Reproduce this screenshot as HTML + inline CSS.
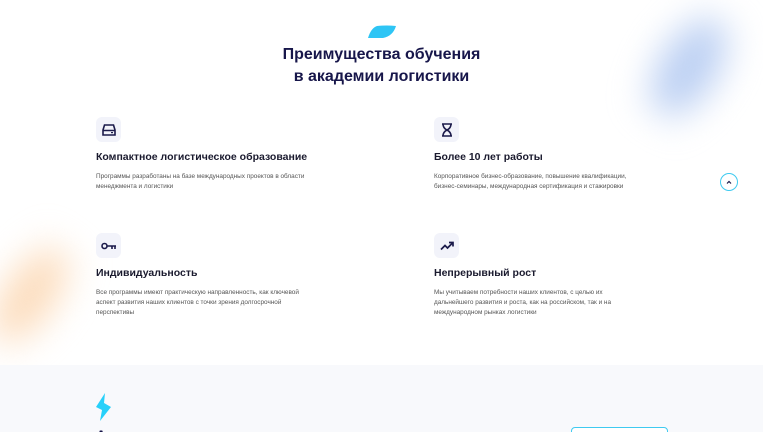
<!DOCTYPE html>
<html><head><meta charset="utf-8"><style>
*{margin:0;padding:0;box-sizing:border-box}
html,body{width:763px;height:432px;overflow:hidden}
body{background:#fff;font-family:"Liberation Sans","DejaVu Sans",sans-serif;position:relative;color:#1b1a3a}
.blob{position:absolute;border-radius:50%;filter:blur(18px)}
h1{position:absolute;left:0;width:763px;text-align:center;font-size:16px;font-weight:bold;color:#17164a;line-height:22px;top:44px}
.ib{position:absolute;width:25px;height:25px;border-radius:6px;background:#f2f3fa;display:flex;align-items:center;justify-content:center}
.t{position:absolute;font-size:10.5px;font-weight:bold;color:#1a1a2e}
.d{position:absolute;font-size:6.4px;line-height:10px;color:#555;width:222px}
</style></head><body>
<div class="blob" style="left:660px;top:12px;width:58px;height:110px;background:#bcd0f3;transform:rotate(32deg)"></div>
<div class="blob" style="left:5px;top:240px;width:50px;height:110px;background:#fcdcbc;transform:rotate(35deg)"></div>
<svg style="position:absolute;left:367px;top:25px" width="30" height="14"><path d="M10 1 Q20 0 29 1 Q26 11 16 13 Q8 13 1 13 Q4 3 10 1Z" fill="#2ec5f5"/></svg>
<h1>Преимущества обучения<br>в академии логистики</h1>

<div class="ib" style="left:96px;top:117px"><svg width="14" height="12" viewBox="0 0 14 12"><path d="M2.5 1 H11.5 L13 6 V11 H1 V6Z M1 6.5 H13" fill="none" stroke="#1b1a4a" stroke-width="1.6"/><path d="M9 8.6 H11" stroke="#1b1a4a" stroke-width="1.2"/></svg></div>
<div class="t" style="left:96px;top:151px">Компактное логистическое образование</div>
<div class="d" style="left:96px;top:172px">Программы разработаны на базе международных проектов в области менеджмента и логистики</div>

<div class="ib" style="left:434px;top:117px"><svg width="12" height="14" viewBox="0 0 12 14"><path d="M1 1 H11 M1 13 H11 M2 1 Q2 5 6 7 Q10 5 10 1 M2 13 Q2 9 6 7 Q10 9 10 13" fill="none" stroke="#1b1a4a" stroke-width="1.6"/></svg></div>
<div class="t" style="left:434px;top:151px">Более 10 лет работы</div>
<div class="d" style="left:434px;top:172px;width:215px">Корпоративное бизнес-образование, повышение квалификации, бизнес-семинары, международная сертификация и стажировки</div>

<div style="position:absolute;left:720px;top:173px;width:18px;height:18px;border:1.3px solid #3fcaf0;border-radius:50%;display:flex;align-items:center;justify-content:center"><svg width="6" height="4"><path d="M1 3.5 L3 1.5 L5 3.5" fill="none" stroke="#1b1a4a" stroke-width="1.2"/></svg></div>

<div class="ib" style="left:96px;top:233px"><svg width="16" height="8" viewBox="0 0 16 8"><circle cx="3.5" cy="4" r="2.5" fill="none" stroke="#1b1a4a" stroke-width="1.6"/><path d="M6 4 H15 M11 4 V7 M14 4 V7" stroke="#1b1a4a" stroke-width="1.6"/></svg></div>
<div class="t" style="left:96px;top:267px">Индивидуальность</div>
<div class="d" style="left:96px;top:288px;width:218px">Все программы имеют практическую направленность, как ключевой аспект развития наших клиентов с точки зрения долгосрочной перспективы</div>

<div class="ib" style="left:434px;top:233px"><svg width="14" height="10" viewBox="0 0 14 10"><path d="M1 8.5 L5 4.5 L7.5 7 L12.5 2 M9 1.5 H13 V5.5" fill="none" stroke="#1b1a4a" stroke-width="1.7"/></svg></div>
<div class="t" style="left:434px;top:267px">Непрерывный рост</div>
<div class="d" style="left:434px;top:288px;width:195px">Мы учитываем потребности наших клиентов, с целью их дальнейшего развития и роста, как на российском, так и на международном рынках логистики</div>

<div style="position:absolute;left:0;top:365px;width:763px;height:67px;background:#f8f9fc"></div>
<svg style="position:absolute;left:95px;top:393px" width="18" height="28" viewBox="0 0 18 28"><path d="M10 0 L1 14 L7 17 L5 28 L16 14 L9 10Z" fill="#27d0fa"/></svg>
<div style="position:absolute;left:96px;top:427px;font-size:14px;font-weight:bold;color:#17164a">Актуальные решения</div>
<div style="position:absolute;left:571px;top:427px;width:97px;height:20px;border:1.3px solid #3fcaf0;border-radius:4px;background:#fff"></div>
</body></html>
